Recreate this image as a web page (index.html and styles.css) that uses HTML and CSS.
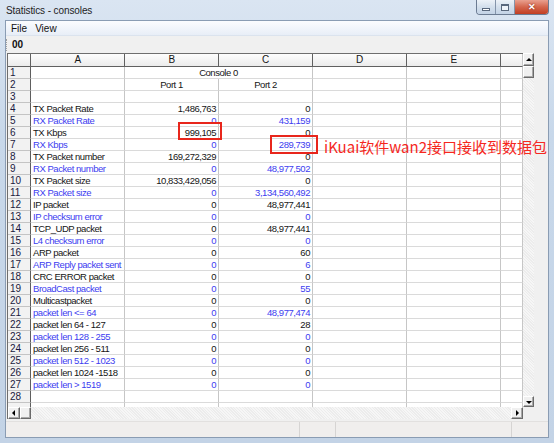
FILE: index.html
```html
<!DOCTYPE html>
<html lang="en">
<head>
    <meta charset="UTF-8">
    <title>Statistics - consoles</title>
    <link rel="stylesheet" href="styles.css">
</head>
<body>
    <div class="window">
        <div class="titlebar">
            <span class="title">Statistics - consoles</span>
            <div class="caption-buttons">
                <span class="cap-btn min"><i></i></span>
                <span class="cap-btn max"><i></i></span>
                <span class="cap-btn close">&#x2715;</span>
            </div>
        </div>

        <div class="client">
            <div class="menubar">
                <span>File</span>
                <span>View</span>
            </div>
            <div class="toolbar">
                <span class="grip"></span>
                <b>00</b>
            </div>

            <div class="gridwrap">
                <div class="viewport">
                    <table class="sheet">
                        <colgroup>
                            <col class="c-rh"><col class="c-wide"><col class="c-wide"><col class="c-wide"><col class="c-wide"><col class="c-wide"><col class="c-end">
                        </colgroup>
                        <thead>
                            <tr><th></th><th>A</th><th>B</th><th>C</th><th>D</th><th>E</th><th></th></tr>
                        </thead>
                        <tbody>
                            <tr><th>1</th><td></td><td colspan="2" class="mid">Console 0</td><td></td><td></td><td></td></tr>
                            <tr><th>2</th><td></td><td class="mid">Port 1</td><td class="mid">Port 2</td><td></td><td></td><td></td></tr>
                            <tr><th>3</th><td></td><td></td><td></td><td></td><td></td><td></td></tr>
                            <tr><th>4</th><td>TX Packet Rate</td><td class="num">1,486,763</td><td class="num">0</td><td></td><td></td><td></td></tr>
                            <tr class="blue"><th>5</th><td>RX Packet Rate</td><td class="num">0</td><td class="num">431,159</td><td></td><td></td><td></td></tr>
                            <tr><th>6</th><td>TX Kbps</td><td class="num">999,105</td><td class="num">0</td><td></td><td></td><td></td></tr>
                            <tr class="blue"><th>7</th><td>RX Kbps</td><td class="num">0</td><td class="num">289,739</td><td></td><td></td><td></td></tr>
                            <tr><th>8</th><td>TX Packet number</td><td class="num">169,272,329</td><td class="num">0</td><td></td><td></td><td></td></tr>
                            <tr class="blue"><th>9</th><td>RX Packet number</td><td class="num">0</td><td class="num">48,977,502</td><td></td><td></td><td></td></tr>
                            <tr><th>10</th><td>TX Packet size</td><td class="num">10,833,429,056</td><td class="num">0</td><td></td><td></td><td></td></tr>
                            <tr class="blue"><th>11</th><td>RX Packet size</td><td class="num">0</td><td class="num">3,134,560,492</td><td></td><td></td><td></td></tr>
                            <tr><th>12</th><td>IP packet</td><td class="num">0</td><td class="num">48,977,441</td><td></td><td></td><td></td></tr>
                            <tr class="blue"><th>13</th><td>IP checksum error</td><td class="num">0</td><td class="num">0</td><td></td><td></td><td></td></tr>
                            <tr><th>14</th><td>TCP_UDP packet</td><td class="num">0</td><td class="num">48,977,441</td><td></td><td></td><td></td></tr>
                            <tr class="blue"><th>15</th><td>L4 checksum error</td><td class="num">0</td><td class="num">0</td><td></td><td></td><td></td></tr>
                            <tr><th>16</th><td>ARP packet</td><td class="num">0</td><td class="num">60</td><td></td><td></td><td></td></tr>
                            <tr class="blue"><th>17</th><td>ARP Reply packet sent</td><td class="num">0</td><td class="num">6</td><td></td><td></td><td></td></tr>
                            <tr><th>18</th><td>CRC ERROR packet</td><td class="num">0</td><td class="num">0</td><td></td><td></td><td></td></tr>
                            <tr class="blue"><th>19</th><td>BroadCast packet</td><td class="num">0</td><td class="num">55</td><td></td><td></td><td></td></tr>
                            <tr><th>20</th><td>Multicastpacket</td><td class="num">0</td><td class="num">0</td><td></td><td></td><td></td></tr>
                            <tr class="blue"><th>21</th><td>packet len &lt;= 64</td><td class="num">0</td><td class="num">48,977,474</td><td></td><td></td><td></td></tr>
                            <tr><th>22</th><td>packet len 64 - 127</td><td class="num">0</td><td class="num">28</td><td></td><td></td><td></td></tr>
                            <tr class="blue"><th>23</th><td>packet len 128 - 255</td><td class="num">0</td><td class="num">0</td><td></td><td></td><td></td></tr>
                            <tr><th>24</th><td>packet len 256 - 511</td><td class="num">0</td><td class="num">0</td><td></td><td></td><td></td></tr>
                            <tr class="blue"><th>25</th><td>packet len 512 - 1023</td><td class="num">0</td><td class="num">0</td><td></td><td></td><td></td></tr>
                            <tr><th>26</th><td>packet len 1024 -1518</td><td class="num">0</td><td class="num">0</td><td></td><td></td><td></td></tr>
                            <tr class="blue"><th>27</th><td>packet len &gt; 1519</td><td class="num">0</td><td class="num">0</td><td></td><td></td><td></td></tr>
                            <tr><th>28</th><td></td><td></td><td></td><td></td><td></td><td></td></tr>
                            <tr class="partial"><th></th><td></td><td></td><td></td><td></td><td></td><td></td></tr>
                        </tbody>
                    </table>
                </div>

                <div class="vscroll">
                    <span class="sbtn up"></span>
                    <span class="thumb-v"></span>
                    <span class="track"></span>
                    <span class="sbtn down"></span>
                </div>

                <div class="hscroll">
                    <span class="sbtn left"></span>
                    <span class="thumb-h"></span>
                    <span class="track"></span>
                    <span class="sbtn right"></span>
                </div>
                <div class="corner"></div>
            </div>

            <div class="statusbar">
                <span class="pane p1"></span>
                <span class="pane p2"></span>
                <span class="pane p3"></span>
                <span class="pane p4"></span>
            </div>
        </div>
    </div>

    <!-- annotations drawn over the screenshot -->
    <div class="mark mark-tx"></div>
    <div class="mark mark-rx"></div>
    <div class="note">iKuai软件wan2接口接收到数据包</div>
</body>
</html>
```

FILE: styles.css
```css
* {
    margin: 0;
    padding: 0;
    box-sizing: border-box;
}

body {
    width: 554px;
    height: 443px;
    overflow: hidden;
    position: relative;
    font-family: "Liberation Sans", Arial, sans-serif;
    background: linear-gradient(#dae5f2, #c8d8ea 30%, #c3d3e6);
}

.window {
    height: 443px;
    padding: 0 5px 5px 5px;
    display: flex;
    flex-direction: column;
}

/* title bar */
.titlebar {
    height: 20px;
    display: flex;
    justify-content: space-between;
    align-items: flex-start;
}

.title {
    margin: 5px 0 0 1px;
    font-size: 10px;
    letter-spacing: -0.1px;
    color: #1e1e1e;
}

.caption-buttons {
    display: flex;
    height: 15px;
    border: 1px solid #6b7b92;
    border-top: none;
    border-radius: 0 0 4px 4px;
    overflow: hidden;
}

.cap-btn {
    display: flex;
    align-items: center;
    justify-content: center;
    width: 19px;
    background: linear-gradient(#edf2f8, #d3dfec 50%, #c3d3e6);
    border-right: 1px solid #8494aa;
}

.cap-btn.min i {
    width: 8px;
    height: 3px;
    margin-top: 5px;
    background: #fff;
    border: 1px solid #59687d;
}

.cap-btn.max i {
    width: 8px;
    height: 7px;
    background: #eef3f9;
    border: 1px solid #59687d;
    box-shadow: inset 0 1px 0 #59687d;
}

.cap-btn.close {
    width: 33px;
    border-right: none;
    color: #fff;
    font-size: 9px;
    font-weight: bold;
    background: linear-gradient(#e9a08f, #d4664d 50%, #c13e22);
    text-shadow: 0 0 2px #7a1a0a;
}

/* client area */
.client {
    flex: 1;
    display: flex;
    flex-direction: column;
    background: #f0f0f0;
    border: 1px solid #8a9cb3;
}

.menubar {
    height: 15px;
    display: flex;
    align-items: center;
    gap: 8px;
    padding-left: 5px;
    font-size: 10px;
    color: #111;
    background: linear-gradient(#fbfcfe, #e8eef7);
    border-bottom: 1px solid #dbe3ee;
}

.toolbar {
    height: 17px;
    display: flex;
    align-items: center;
    gap: 5px;
    font-size: 10px;
    color: #111;
}

.grip {
    width: 1px;
    height: 12px;
    border-left: 1px dotted #a0a0a0;
}

/* spreadsheet */
.gridwrap {
    margin-left: 1px;
    display: grid;
    grid-template-columns: 516px 11px;
    grid-template-rows: 354px 12px;
}

.viewport {
    overflow: hidden;
    background: #fff;
    border-left: 1px solid #6e6e6e;
    border-top: 1px solid #6e6e6e;
}

.sheet {
    table-layout: fixed;
    width: 515px;
    border-collapse: separate;
    border-spacing: 0;
    font-size: 9.5px;
    letter-spacing: -0.45px;
    color: #151515;
}

.c-rh { width: 23px; }
.c-wide { width: 94px; }
.c-end { width: 22px; }

.sheet td,
.sheet th {
    height: 12px;
    line-height: 11px;
    padding: 0 2px;
    white-space: nowrap;
    overflow: hidden;
    font-weight: normal;
    border-right: 1px solid #c6c6c6;
    border-bottom: 1px solid #dadada;
}

.sheet thead th {
    height: 13px;
    line-height: 12px;
    font-size: 10px;
    text-align: center;
    background: linear-gradient(#fdfdfd, #ebebeb);
    border-right: 1px solid #606060;
    border-bottom: 1px solid #606060;
}

.sheet thead th:last-child {
    border-right: 1px solid #c6c6c6;
}

.sheet tbody th {
    text-align: left;
    font-size: 10px;
    letter-spacing: 0;
    background: #f2f2f2;
    border-right: 1px solid #5e5e5e;
    border-bottom: 1px solid #c4c4c4;
    color: #1a1a40;
}

.sheet td.num {
    text-align: right;
}

.sheet td.mid {
    text-align: center;
}

.sheet tr.blue td {
    color: #3d3df0;
}

/* scrollbars */
.vscroll,
.hscroll {
    display: flex;
    background: #f4f4f4;
}

.vscroll {
    flex-direction: column;
}

.track {
    flex: 1;
    background: repeating-linear-gradient(45deg, #f6f6f6 0 1px, #ececec 1px 2px);
}

.sbtn,
.thumb-v,
.thumb-h {
    position: relative;
    background: #f0f0f0;
    border: 1px solid;
    border-color: #fff #6a6a6a #6a6a6a #fff;
    box-shadow: inset -1px -1px 0 #a8a8a8;
}

.vscroll .sbtn { height: 13px; }
.vscroll .sbtn.down { height: 11px; }
.thumb-v { height: 12px; }

.hscroll .sbtn { width: 12px; }
.thumb-h { width: 11px; }

.sbtn::after {
    content: "";
    position: absolute;
    left: 50%;
    top: 50%;
    border: 3px solid transparent;
}

.sbtn.up::after {
    border-bottom-color: #000;
    border-top-width: 0;
    transform: translate(-3px, -2px);
}

.sbtn.down::after {
    border-top-color: #000;
    border-bottom-width: 0;
    transform: translate(-3px, -1px);
}

.sbtn.left::after {
    border-right-color: #000;
    border-left-width: 0;
    transform: translate(-2px, -3px);
}

.sbtn.right::after {
    border-left-color: #000;
    border-right-width: 0;
    transform: translate(-1px, -3px);
}

.hscroll {
    border-left: 1px solid #6e6e6e;
}

.corner {
    background: #f0f0f0;
}

/* status bar */
.statusbar {
    margin-top: 2px;
    height: 16px;
    display: flex;
    background: #f0eeed;
    border-top: 1px solid #e2e0df;
}

.pane {
    border-right: 1px solid #d6d4d3;
}

.p1 { width: 294px; }
.p2 { width: 36px; }
.p3 { width: 176px; }
.p4 { flex: 1; border-right: none; }

/* red annotations */
.mark {
    position: absolute;
    border: 2px solid #e8261c;
}

.mark-tx {
    left: 178px;
    top: 122px;
    width: 44px;
    height: 18px;
}

.mark-rx {
    left: 270px;
    top: 135px;
    width: 48px;
    height: 19px;
}

.note {
    position: absolute;
    left: 324px;
    top: 137px;
    font-family: "Noto Sans CJK SC", "Noto Sans", sans-serif;
    font-size: 15px;
    line-height: 20px;
    color: #f5281e;
}
```
